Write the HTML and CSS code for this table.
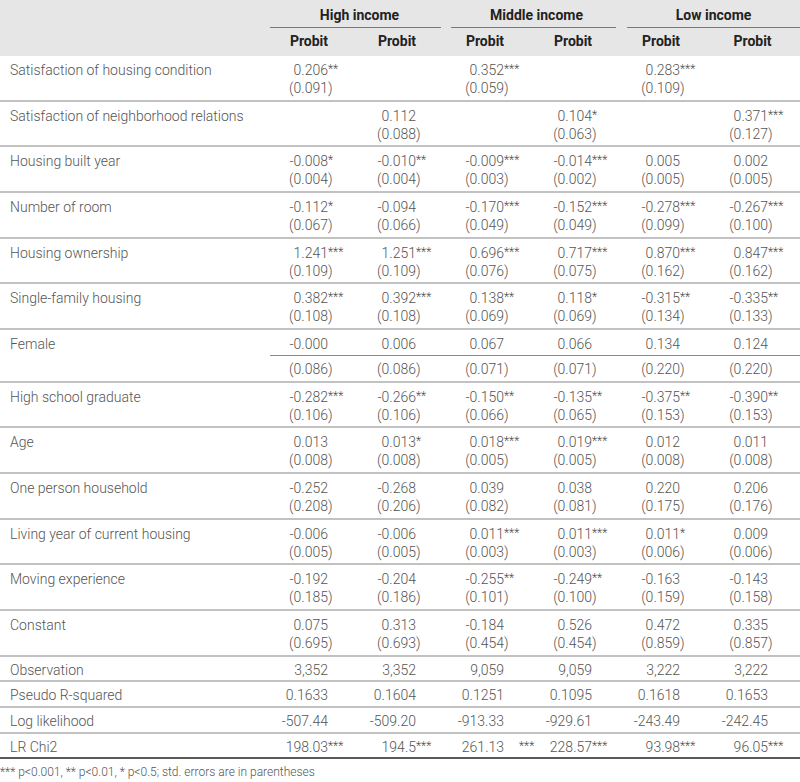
FILE: index.html
```html
<!DOCTYPE html>
<html lang="en">
<head>
<meta charset="utf-8">
<title>Probit results by income</title>
<link rel="stylesheet" href="styles.css">
</head>
<body>
<table class="res">
  <colgroup>
    <col class="c-lab"><col class="c-d"><col class="c-d"><col class="c-d"><col class="c-d"><col class="c-d"><col class="c-last">
  </colgroup>
  <thead>
    <tr class="h1">
      <th rowspan="2" class="blank"></th>
      <th colspan="2"><div class="grp g-high">High income</div></th>
      <th colspan="2"><div class="grp g-mid">Middle income</div></th>
      <th colspan="2"><div class="grp g-low">Low income</div></th>
    </tr>
    <tr class="h2">
      <th>Probit</th><th>Probit</th><th>Probit</th><th>Probit</th><th>Probit</th><th>Probit</th>
    </tr>
  </thead>
  <tbody>
    <tr>
      <td class="lab">Satisfaction of housing condition</td>
      <td class="v"><div class="ln"><span class="n">0.206</span><span class="s">**</span></div><div class="ln"><span class="n">(0.091</span><span class="p">)</span></div></td>
      <td class="v"></td>
      <td class="v"><div class="ln"><span class="n">0.352</span><span class="s">***</span></div><div class="ln"><span class="n">(0.059</span><span class="p">)</span></div></td>
      <td class="v"></td>
      <td class="v"><div class="ln"><span class="n">0.283</span><span class="s">***</span></div><div class="ln"><span class="n">(0.109</span><span class="p">)</span></div></td>
      <td class="v"></td>
    </tr>
    <tr>
      <td class="lab">Satisfaction of neighborhood relations</td>
      <td class="v"></td>
      <td class="v"><div class="ln"><span class="n">0.112</span><span class="s"></span></div><div class="ln"><span class="n">(0.088</span><span class="p">)</span></div></td>
      <td class="v"></td>
      <td class="v"><div class="ln"><span class="n">0.104</span><span class="s">*</span></div><div class="ln"><span class="n">(0.063</span><span class="p">)</span></div></td>
      <td class="v"></td>
      <td class="v"><div class="ln"><span class="n">0.371</span><span class="s">***</span></div><div class="ln"><span class="n">(0.127</span><span class="p">)</span></div></td>
    </tr>
    <tr>
      <td class="lab">Housing built year</td>
      <td class="v"><div class="ln"><span class="n">-0.008</span><span class="s">*</span></div><div class="ln"><span class="n">(0.004</span><span class="p">)</span></div></td>
      <td class="v"><div class="ln"><span class="n">-0.010</span><span class="s">**</span></div><div class="ln"><span class="n">(0.004</span><span class="p">)</span></div></td>
      <td class="v"><div class="ln"><span class="n">-0.009</span><span class="s">***</span></div><div class="ln"><span class="n">(0.003</span><span class="p">)</span></div></td>
      <td class="v"><div class="ln"><span class="n">-0.014</span><span class="s">***</span></div><div class="ln"><span class="n">(0.002</span><span class="p">)</span></div></td>
      <td class="v"><div class="ln"><span class="n">0.005</span><span class="s"></span></div><div class="ln"><span class="n">(0.005</span><span class="p">)</span></div></td>
      <td class="v"><div class="ln"><span class="n">0.002</span><span class="s"></span></div><div class="ln"><span class="n">(0.005</span><span class="p">)</span></div></td>
    </tr>
    <tr>
      <td class="lab">Number of room</td>
      <td class="v"><div class="ln"><span class="n">-0.112</span><span class="s">*</span></div><div class="ln"><span class="n">(0.067</span><span class="p">)</span></div></td>
      <td class="v"><div class="ln"><span class="n">-0.094</span><span class="s"></span></div><div class="ln"><span class="n">(0.066</span><span class="p">)</span></div></td>
      <td class="v"><div class="ln"><span class="n">-0.170</span><span class="s">***</span></div><div class="ln"><span class="n">(0.049</span><span class="p">)</span></div></td>
      <td class="v"><div class="ln"><span class="n">-0.152</span><span class="s">***</span></div><div class="ln"><span class="n">(0.049</span><span class="p">)</span></div></td>
      <td class="v"><div class="ln"><span class="n">-0.278</span><span class="s">***</span></div><div class="ln"><span class="n">(0.099</span><span class="p">)</span></div></td>
      <td class="v"><div class="ln"><span class="n">-0.267</span><span class="s">***</span></div><div class="ln"><span class="n">(0.100</span><span class="p">)</span></div></td>
    </tr>
    <tr>
      <td class="lab">Housing ownership</td>
      <td class="v"><div class="ln"><span class="n">1.241</span><span class="s">***</span></div><div class="ln"><span class="n">(0.109</span><span class="p">)</span></div></td>
      <td class="v"><div class="ln"><span class="n">1.251</span><span class="s">***</span></div><div class="ln"><span class="n">(0.109</span><span class="p">)</span></div></td>
      <td class="v"><div class="ln"><span class="n">0.696</span><span class="s">***</span></div><div class="ln"><span class="n">(0.076</span><span class="p">)</span></div></td>
      <td class="v"><div class="ln"><span class="n">0.717</span><span class="s">***</span></div><div class="ln"><span class="n">(0.075</span><span class="p">)</span></div></td>
      <td class="v"><div class="ln"><span class="n">0.870</span><span class="s">***</span></div><div class="ln"><span class="n">(0.162</span><span class="p">)</span></div></td>
      <td class="v"><div class="ln"><span class="n">0.847</span><span class="s">***</span></div><div class="ln"><span class="n">(0.162</span><span class="p">)</span></div></td>
    </tr>
    <tr>
      <td class="lab">Single-family housing</td>
      <td class="v"><div class="ln"><span class="n">0.382</span><span class="s">***</span></div><div class="ln"><span class="n">(0.108</span><span class="p">)</span></div></td>
      <td class="v"><div class="ln"><span class="n">0.392</span><span class="s">***</span></div><div class="ln"><span class="n">(0.108</span><span class="p">)</span></div></td>
      <td class="v"><div class="ln"><span class="n">0.138</span><span class="s">**</span></div><div class="ln"><span class="n">(0.069</span><span class="p">)</span></div></td>
      <td class="v"><div class="ln"><span class="n">0.118</span><span class="s">*</span></div><div class="ln"><span class="n">(0.069</span><span class="p">)</span></div></td>
      <td class="v"><div class="ln"><span class="n">-0.315</span><span class="s">**</span></div><div class="ln"><span class="n">(0.134</span><span class="p">)</span></div></td>
      <td class="v"><div class="ln"><span class="n">-0.335</span><span class="s">**</span></div><div class="ln"><span class="n">(0.133</span><span class="p">)</span></div></td>
    </tr>
    <tr class="split">
      <td class="lab">Female</td>
      <td class="v sp first"><div class="top ln"><span class="n">-0.000</span><span class="s"></span></div><div class="bot ln"><span class="n">(0.086</span><span class="p">)</span></div></td>
      <td class="v sp"><div class="top ln"><span class="n">0.006</span><span class="s"></span></div><div class="bot ln"><span class="n">(0.086</span><span class="p">)</span></div></td>
      <td class="v sp"><div class="top ln"><span class="n">0.067</span><span class="s"></span></div><div class="bot ln"><span class="n">(0.071</span><span class="p">)</span></div></td>
      <td class="v sp"><div class="top ln"><span class="n">0.066</span><span class="s"></span></div><div class="bot ln"><span class="n">(0.071</span><span class="p">)</span></div></td>
      <td class="v sp"><div class="top ln"><span class="n">0.134</span><span class="s"></span></div><div class="bot ln"><span class="n">(0.220</span><span class="p">)</span></div></td>
      <td class="v sp"><div class="top ln"><span class="n">0.124</span><span class="s"></span></div><div class="bot ln"><span class="n">(0.220</span><span class="p">)</span></div></td>
    </tr>
    <tr>
      <td class="lab">High school graduate</td>
      <td class="v"><div class="ln"><span class="n">-0.282</span><span class="s">***</span></div><div class="ln"><span class="n">(0.106</span><span class="p">)</span></div></td>
      <td class="v"><div class="ln"><span class="n">-0.266</span><span class="s">**</span></div><div class="ln"><span class="n">(0.106</span><span class="p">)</span></div></td>
      <td class="v"><div class="ln"><span class="n">-0.150</span><span class="s">**</span></div><div class="ln"><span class="n">(0.066</span><span class="p">)</span></div></td>
      <td class="v"><div class="ln"><span class="n">-0.135</span><span class="s">**</span></div><div class="ln"><span class="n">(0.065</span><span class="p">)</span></div></td>
      <td class="v"><div class="ln"><span class="n">-0.375</span><span class="s">**</span></div><div class="ln"><span class="n">(0.153</span><span class="p">)</span></div></td>
      <td class="v"><div class="ln"><span class="n">-0.390</span><span class="s">**</span></div><div class="ln"><span class="n">(0.153</span><span class="p">)</span></div></td>
    </tr>
    <tr>
      <td class="lab">Age</td>
      <td class="v"><div class="ln"><span class="n">0.013</span><span class="s"></span></div><div class="ln"><span class="n">(0.008</span><span class="p">)</span></div></td>
      <td class="v"><div class="ln"><span class="n">0.013</span><span class="s">*</span></div><div class="ln"><span class="n">(0.008</span><span class="p">)</span></div></td>
      <td class="v"><div class="ln"><span class="n">0.018</span><span class="s">***</span></div><div class="ln"><span class="n">(0.005</span><span class="p">)</span></div></td>
      <td class="v"><div class="ln"><span class="n">0.019</span><span class="s">***</span></div><div class="ln"><span class="n">(0.005</span><span class="p">)</span></div></td>
      <td class="v"><div class="ln"><span class="n">0.012</span><span class="s"></span></div><div class="ln"><span class="n">(0.008</span><span class="p">)</span></div></td>
      <td class="v"><div class="ln"><span class="n">0.011</span><span class="s"></span></div><div class="ln"><span class="n">(0.008</span><span class="p">)</span></div></td>
    </tr>
    <tr>
      <td class="lab">One person household</td>
      <td class="v"><div class="ln"><span class="n">-0.252</span><span class="s"></span></div><div class="ln"><span class="n">(0.208</span><span class="p">)</span></div></td>
      <td class="v"><div class="ln"><span class="n">-0.268</span><span class="s"></span></div><div class="ln"><span class="n">(0.206</span><span class="p">)</span></div></td>
      <td class="v"><div class="ln"><span class="n">0.039</span><span class="s"></span></div><div class="ln"><span class="n">(0.082</span><span class="p">)</span></div></td>
      <td class="v"><div class="ln"><span class="n">0.038</span><span class="s"></span></div><div class="ln"><span class="n">(0.081</span><span class="p">)</span></div></td>
      <td class="v"><div class="ln"><span class="n">0.220</span><span class="s"></span></div><div class="ln"><span class="n">(0.175</span><span class="p">)</span></div></td>
      <td class="v"><div class="ln"><span class="n">0.206</span><span class="s"></span></div><div class="ln"><span class="n">(0.176</span><span class="p">)</span></div></td>
    </tr>
    <tr>
      <td class="lab">Living year of current housing</td>
      <td class="v"><div class="ln"><span class="n">-0.006</span><span class="s"></span></div><div class="ln"><span class="n">(0.005</span><span class="p">)</span></div></td>
      <td class="v"><div class="ln"><span class="n">-0.006</span><span class="s"></span></div><div class="ln"><span class="n">(0.005</span><span class="p">)</span></div></td>
      <td class="v"><div class="ln"><span class="n">0.011</span><span class="s">***</span></div><div class="ln"><span class="n">(0.003</span><span class="p">)</span></div></td>
      <td class="v"><div class="ln"><span class="n">0.011</span><span class="s">***</span></div><div class="ln"><span class="n">(0.003</span><span class="p">)</span></div></td>
      <td class="v"><div class="ln"><span class="n">0.011</span><span class="s">*</span></div><div class="ln"><span class="n">(0.006</span><span class="p">)</span></div></td>
      <td class="v"><div class="ln"><span class="n">0.009</span><span class="s"></span></div><div class="ln"><span class="n">(0.006</span><span class="p">)</span></div></td>
    </tr>
    <tr>
      <td class="lab">Moving experience</td>
      <td class="v"><div class="ln"><span class="n">-0.192</span><span class="s"></span></div><div class="ln"><span class="n">(0.185</span><span class="p">)</span></div></td>
      <td class="v"><div class="ln"><span class="n">-0.204</span><span class="s"></span></div><div class="ln"><span class="n">(0.186</span><span class="p">)</span></div></td>
      <td class="v"><div class="ln"><span class="n">-0.255</span><span class="s">**</span></div><div class="ln"><span class="n">(0.101</span><span class="p">)</span></div></td>
      <td class="v"><div class="ln"><span class="n">-0.249</span><span class="s">**</span></div><div class="ln"><span class="n">(0.100</span><span class="p">)</span></div></td>
      <td class="v"><div class="ln"><span class="n">-0.163</span><span class="s"></span></div><div class="ln"><span class="n">(0.159</span><span class="p">)</span></div></td>
      <td class="v"><div class="ln"><span class="n">-0.143</span><span class="s"></span></div><div class="ln"><span class="n">(0.158</span><span class="p">)</span></div></td>
    </tr>
    <tr class="last-coef">
      <td class="lab">Constant</td>
      <td class="v"><div class="ln"><span class="n">0.075</span><span class="s"></span></div><div class="ln"><span class="n">(0.695</span><span class="p">)</span></div></td>
      <td class="v"><div class="ln"><span class="n">0.313</span><span class="s"></span></div><div class="ln"><span class="n">(0.693</span><span class="p">)</span></div></td>
      <td class="v"><div class="ln"><span class="n">-0.184</span><span class="s"></span></div><div class="ln"><span class="n">(0.454</span><span class="p">)</span></div></td>
      <td class="v"><div class="ln"><span class="n">0.526</span><span class="s"></span></div><div class="ln"><span class="n">(0.454</span><span class="p">)</span></div></td>
      <td class="v"><div class="ln"><span class="n">0.472</span><span class="s"></span></div><div class="ln"><span class="n">(0.859</span><span class="p">)</span></div></td>
      <td class="v"><div class="ln"><span class="n">0.335</span><span class="s"></span></div><div class="ln"><span class="n">(0.857</span><span class="p">)</span></div></td>
    </tr>
    <tr class="stat">
      <td class="lab">Observation</td>
      <td class="v"><div class="ln"><span class="n">3,352</span><span class="s"></span></div></td>
      <td class="v"><div class="ln"><span class="n">3,352</span><span class="s"></span></div></td>
      <td class="v"><div class="ln"><span class="n">9,059</span><span class="s"></span></div></td>
      <td class="v"><div class="ln"><span class="n">9,059</span><span class="s"></span></div></td>
      <td class="v"><div class="ln"><span class="n">3,222</span><span class="s"></span></div></td>
      <td class="v"><div class="ln"><span class="n">3,222</span><span class="s"></span></div></td>
    </tr>
    <tr class="stat">
      <td class="lab">Pseudo R-squared</td>
      <td class="v"><div class="ln"><span class="n">0.1633</span><span class="s"></span></div></td>
      <td class="v"><div class="ln"><span class="n">0.1604</span><span class="s"></span></div></td>
      <td class="v"><div class="ln"><span class="n">0.1251</span><span class="s"></span></div></td>
      <td class="v"><div class="ln"><span class="n">0.1095</span><span class="s"></span></div></td>
      <td class="v"><div class="ln"><span class="n">0.1618</span><span class="s"></span></div></td>
      <td class="v"><div class="ln"><span class="n">0.1653</span><span class="s"></span></div></td>
    </tr>
    <tr class="stat">
      <td class="lab">Log likelihood</td>
      <td class="v"><div class="ln"><span class="n">-507.44</span><span class="s"></span></div></td>
      <td class="v"><div class="ln"><span class="n">-509.20</span><span class="s"></span></div></td>
      <td class="v"><div class="ln"><span class="n">-913.33</span><span class="s"></span></div></td>
      <td class="v"><div class="ln"><span class="n">-929.61</span><span class="s"></span></div></td>
      <td class="v"><div class="ln"><span class="n">-243.49</span><span class="s"></span></div></td>
      <td class="v"><div class="ln"><span class="n">-242.45</span><span class="s"></span></div></td>
    </tr>
    <tr class="stat final">
      <td class="lab">LR Chi2</td>
      <td class="v"><div class="ln"><span class="n">198.03</span><span class="s">***</span></div></td>
      <td class="v"><div class="ln"><span class="n">194.5</span><span class="s">***</span></div></td>
      <td class="v"><div class="ln"><span class="n">261.13</span><span class="s gap">***</span></div></td>
      <td class="v"><div class="ln"><span class="n">228.57</span><span class="s">***</span></div></td>
      <td class="v"><div class="ln"><span class="n">93.98</span><span class="s">***</span></div></td>
      <td class="v"><div class="ln"><span class="n">96.05</span><span class="s">***</span></div></td>
    </tr>
  </tbody>
</table>
<p class="note">*** p&lt;0.001, ** p&lt;0.01, * p&lt;0.5; std. errors are in parentheses</p>
</body>
</html>
```

FILE: styles.css
```css
html, body {
  margin: 0;
  padding: 0;
  background: #ffffff;
}

body {
  font-family: Roboto, "Liberation Sans", Arial, sans-serif;
  font-size: 14px;
  font-weight: 300;
  color: #555555;
}

.res {
  width: 800px;
  table-layout: fixed;
  border-collapse: separate;
  border-spacing: 0;
}

.c-lab { width: 265px; }
.c-d { width: 88px; }
.c-last { width: 95px; }

.res th,
.res td {
  padding: 0;
  line-height: 18px;
}

/* header */
.res thead th {
  background: #e6e6e6;
  color: #222222;
  font-weight: 700;
  text-align: center;
}

.h1 th {
  padding-top: 6px;
  vertical-align: top;
}

.grp {
  padding-bottom: 3px;
  border-bottom: 1px solid #7a7a7a;
}

.g-high { margin-left: 5px; padding-left: 8px; }
.g-mid { margin-left: 10px; margin-right: 1px; padding-left: 6px; }
.g-low { margin-left: 10px; }

.h2 th {
  padding-top: 4px;
  padding-bottom: 6px;
}

/* body rows */
.res tbody td {
  vertical-align: top;
  padding-top: 5px;
  padding-bottom: 2.67px;
  border-bottom: 2px solid #c2c2c2;
}

.res tbody td.lab {
  padding-left: 10px;
  white-space: nowrap;
}

.ln {
  display: grid;
  grid-template-columns: 63px 1fr;
  white-space: nowrap;
}

.n {
  text-align: right;
}

.s {
  font-size: 12px;
  line-height: 18px;
  position: relative;
  top: -1px;
  color: #4a4a4a;
}

.s.gap {
  padding-left: 15px;
}

/* Female row: rule between coefficient and error */
.split td.sp {
  padding-top: 0;
  padding-bottom: 0;
}

.split .top {
  padding-top: 5px;
  padding-bottom: 2px;
  border-bottom: 1px solid #8a8a8a;
}

.split .first .top {
  margin-left: 5px;
  grid-template-columns: 58px 1fr;
}

.split .bot {
  padding-top: 4px;
  padding-bottom: 2.67px;
}

.last-coef td {
  border-bottom-color: #5a5a5a;
}

.res tbody tr.stat td {
  padding-top: 4px;
  padding-bottom: 1.7px;
}

.res tbody tr.final td {
  border-bottom-color: #5a5a5a;
}

.note {
  margin: 5px 0 0 0;
  font-size: 12px;
  line-height: 16px;
  color: #555555;
}
```
